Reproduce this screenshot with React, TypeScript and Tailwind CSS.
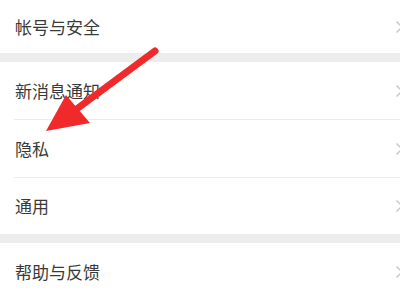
const Chevron = () => (
  <svg
    width="9"
    height="14"
    viewBox="0 0 9 14"
    className="absolute right-[-4px] top-1/2 -translate-y-1/2"
  >
    <path d="M1.5 1.5 L7 7 L1.5 12.5" fill="none" stroke="#c8c8c8" strokeWidth="1.5" />
  </svg>
);

const Row = ({ label, h, divider }: { label: string; h: string; divider?: boolean }) => (
  <div className={`relative flex items-center bg-white ${h}`}>
    <span className="pl-[15px] text-[17px] text-[#3a3a3a]">{label}</span>
    <Chevron />
    {divider && <div className="absolute bottom-0 left-[14px] right-0 h-px bg-[#ececec]" />}
  </div>
);

export default function App() {
  return (
    <div
      className="relative w-[400px] h-[300px] overflow-hidden bg-[#ededed]"
      style={{ fontFamily: '"Noto Sans CJK SC", "Noto Sans", sans-serif' }}
    >
      <Row label="帐号与安全" h="h-[53px]" />
      <div className="h-[9px]" />
      <Row label="新消息通知" h="h-[58px]" divider />
      <Row label="隐私" h="h-[58px]" divider />
      <Row label="通用" h="h-[56px]" />
      <div className="h-[9px]" />
      <Row label="帮助与反馈" h="h-[58px]" />

      <svg width="400" height="300" className="absolute inset-0 pointer-events-none">
        <line x1="155" y1="51" x2="78" y2="108" stroke="#f0292b" strokeWidth="7" strokeLinecap="round" />
        <polygon points="46,131 66,95 90,123" fill="#f0292b" />
      </svg>
    </div>
  );
}
